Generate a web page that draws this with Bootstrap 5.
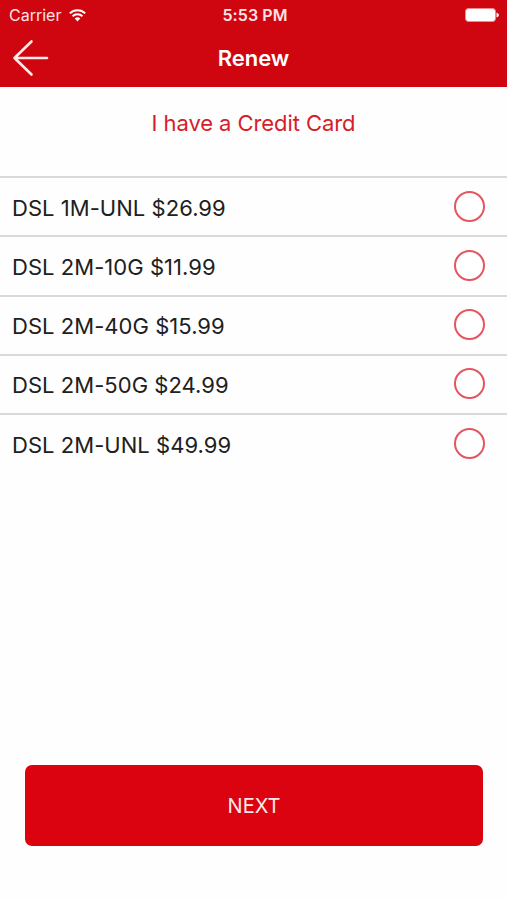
<!DOCTYPE html>
<html lang="en">
<head>
<meta charset="utf-8">
<meta name="viewport" content="width=device-width, initial-scale=1">
<title>Renew</title>
<link href="https://cdn.jsdelivr.net/npm/bootstrap@5.3.0/dist/css/bootstrap.min.css" rel="stylesheet">
<style>
body { font-family: Inter, "Liberation Sans", sans-serif; background: #fefefe; height: 900px; overflow: hidden; }
.app-header { background: #cf0610; height: 87px; color: #fff; }
.status-bar { height: 29px; padding: 0 8px 0 9px; font-size: 16px; line-height: 30px; color: #ffe4e4; }
.status-time { font-weight: 600; font-size: 16px; letter-spacing: .1px; padding-left: 2px; }
.title-bar { height: 58px; padding: 0 11px; }
.page-title { font-size: 22px; line-height: 58px; font-weight: 600; }
.card-heading { color: #d5202a; font-size: 22px; letter-spacing: -.08px; height: 89px; line-height: 72px; }
.plan-row { height: 59.25px; border-top: 2px solid #d9d9d9; padding: 0 22px 0 12px; color: #202020; font-size: 22px; letter-spacing: .04px; cursor: pointer; }
.plan-name { padding-top: 3px; }
.plan-radio { appearance: none; width: 31px; height: 31px; border: 2px solid #e4555e; border-radius: 50%; background: #fff; margin: 0 0 1px; }
.plan-radio:checked { background: #da030f; }
.btn-next { --bs-btn-bg: #da030f; --bs-btn-color: #ffe8e8; --bs-btn-hover-bg: #c0030e; --bs-btn-hover-color: #fff; --bs-btn-border-width: 0; --bs-btn-border-radius: 7px; height: 81px; font-size: 20px; }
.next-wrap { padding: 0 24px 54px 25px; }
</style>
</head>
<body class="d-flex flex-column">
<header class="app-header">
  <div class="status-bar row g-0 align-items-center">
    <div class="col d-flex align-items-center">
      <span class="carrier">Carrier</span>
      <svg class="ms-2" width="17" height="13" viewBox="0 0 17 13" fill="none" stroke="#fff" stroke-width="2">
        <path d="M.8 4.400a11 11 0 0 1 15.400 0M3.500 7.200a7.200 7.200 0 0 1 10 0"/>
        <path d="M8.500 12.600 5.700 9.600a4.100 4.100 0 0 1 5.600 0z" fill="#fff" stroke="none"/>
      </svg>
    </div>
    <div class="col-auto status-time">5:53 PM</div>
    <div class="col d-flex justify-content-end">
      <svg width="34" height="14" viewBox="0 0 34 14">
        <rect x=".5" y=".5" width="30" height="13" rx="3" fill="#fff" stroke="#f08b91"/>
        <rect x="2" y="2" width="27" height="10" rx="1" fill="#fff"/>
        <path d="M31.500 4.500v5Q34 8.500 34 7t-2.500-2.500z" fill="#fff"/>
      </svg>
    </div>
  </div>
  <div class="title-bar row g-0 align-items-center">
    <div class="col d-flex">
      <a href="#" class="d-flex" aria-label="Back">
        <svg width="38" height="38" viewBox="0 0 38 38" fill="none" stroke="#ffe9e9" stroke-width="2.600" stroke-linecap="round" stroke-linejoin="round"><path d="M36 19H3.500M20.500 2.500 3.500 19l17 16.500"/></svg>
      </a>
    </div>
    <div class="col-auto page-title">Renew</div>
    <div class="col"></div>
  </div>
</header>
<main class="flex-grow-1 d-flex flex-column">
  <div class="card-heading text-center"><span>I have a Credit Card</span></div>
  <div>
    <label class="plan-row d-flex align-items-center justify-content-between"><span class="plan-name">DSL 1M-UNL $26.99</span><input class="plan-radio" type="radio" name="plan"></label>
    <label class="plan-row d-flex align-items-center justify-content-between"><span class="plan-name">DSL 2M-10G $11.99</span><input class="plan-radio" type="radio" name="plan"></label>
    <label class="plan-row d-flex align-items-center justify-content-between"><span class="plan-name">DSL 2M-40G $15.99</span><input class="plan-radio" type="radio" name="plan"></label>
    <label class="plan-row d-flex align-items-center justify-content-between"><span class="plan-name">DSL 2M-50G $24.99</span><input class="plan-radio" type="radio" name="plan"></label>
    <label class="plan-row d-flex align-items-center justify-content-between"><span class="plan-name">DSL 2M-UNL $49.99</span><input class="plan-radio" type="radio" name="plan"></label>
  </div>
  <div class="next-wrap mt-auto"><button type="button" class="btn btn-next w-100">NEXT</button></div>
</main>
<script src="https://cdn.jsdelivr.net/npm/bootstrap@5.3.0/dist/js/bootstrap.bundle.min.js"></script>
</body>
</html>
